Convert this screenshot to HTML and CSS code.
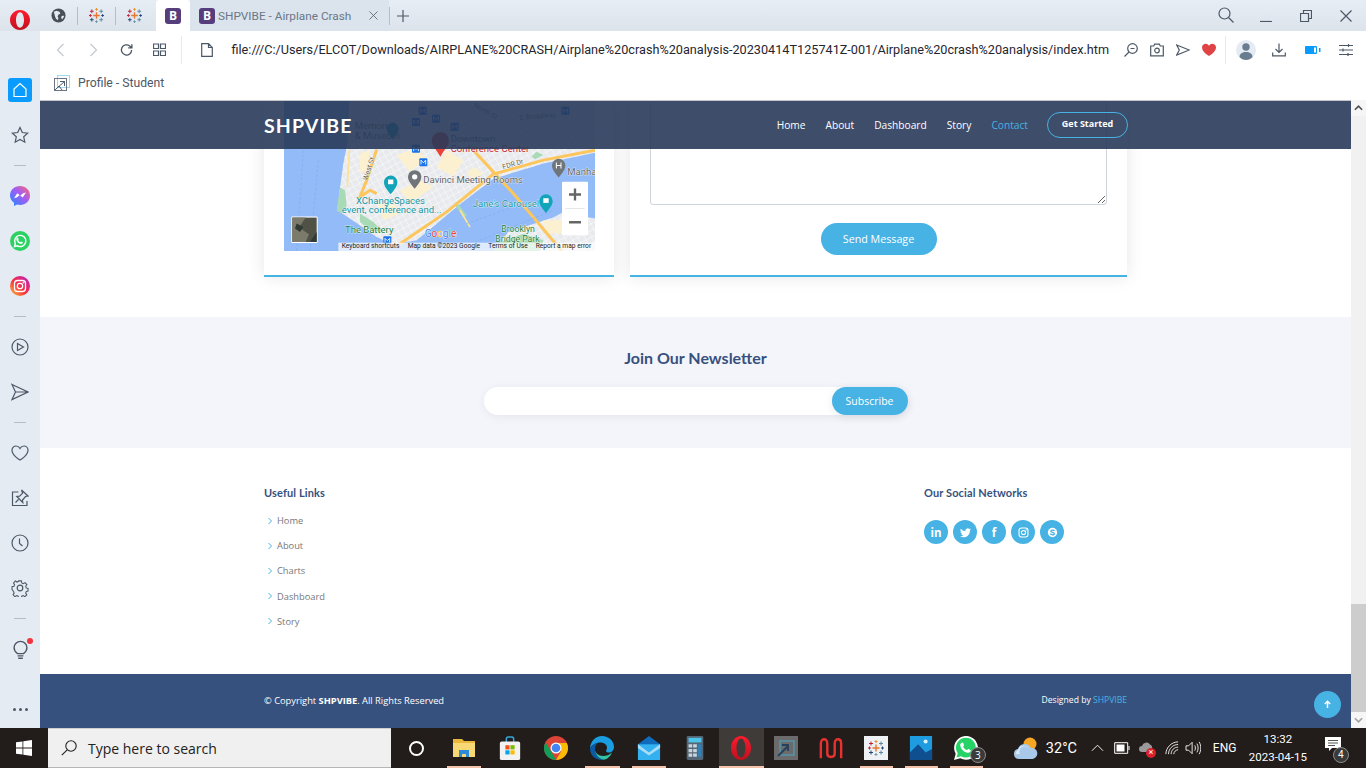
FILE: index.html
```html
<!DOCTYPE html>
<html>
<head>
    <title>SHPVIBE - Airplane Crash</title>
    <link rel="stylesheet" href="styles.css">
</head>
<body>
<svg class="defs" width="0" height="0">
    <defs>
        <g id="tableau">
            <path stroke="#e8762c" stroke-width="1.4" d="M8 4.5v7M4.5 8h7"/>
            <path stroke="#5b879b" stroke-width="1" d="M13 1.5v4M11 3.5h4"/>
            <path stroke="#c72035" stroke-width="1" d="M3 1.5v4M1 3.5h4"/>
            <path stroke="#1f447e" stroke-width="1" d="M3 10.5v4M1 12.5h4"/>
            <path stroke="#59879b" stroke-width="1" d="M13 10.5v4M11 12.5h4"/>
            <path stroke="#eb912b" stroke-width="1" d="M8 0v3M6.5 1.5h3"/>
            <path stroke="#7099a6" stroke-width="1" d="M8 13v3M6.5 14.5h3"/>
            <path stroke="#c72035" stroke-width="1" d="M1.5 6.5v3M0 8h3"/>
            <path stroke="#1f447e" stroke-width="1" d="M14.5 6.5v3M13 8h3"/>
        </g>
        <pattern id="streets" width="18" height="18" patternUnits="userSpaceOnUse" patternTransform="rotate(-28)">
            <path d="M0 0H18M0 0V18" stroke="#fff" stroke-width="2.5" fill="none"/>
        </pattern>
        <linearGradient id="messengerFill" x1="0" y1="1" x2="1" y2="0">
            <stop offset="0" stop-color="#1d8cff"/>
            <stop offset=".55" stop-color="#a35cf5"/>
            <stop offset="1" stop-color="#ff6a6a"/>
        </linearGradient>
        <linearGradient id="instaFill" x1="0" y1="1" x2="1" y2="0">
            <stop offset="0" stop-color="#fdc83a"/>
            <stop offset=".45" stop-color="#f7313c"/>
            <stop offset="1" stop-color="#b81fd0"/>
        </linearGradient>
        <linearGradient id="operaFill" x1="0" y1="0" x2="0" y2="1">
            <stop offset="0" stop-color="#ff1b2d"/>
            <stop offset="1" stop-color="#c0101f"/>
        </linearGradient>
    </defs>
</svg>

<div class="window">
    <div class="tabbar">
        <div class="opera-cell">
            <svg class="opera-logo" viewBox="0 0 20 20"><path fill="url(#operaFill)" fill-rule="evenodd" d="M10 0c5.500 0 10 4.500 10 10s-4.500 10-10 10S0 15.500 0 10 4.500 0 10 0zm0 2.300C7.700 2.300 6 5.700 6 10s1.700 7.700 4 7.700 4-3.400 4-7.700-1.700-7.700-4-7.700z"/></svg>
        </div>
        <div class="pin-tab">
            <svg class="tab-ico" viewBox="0 0 16 16"><circle cx="8" cy="8" r="7.5" fill="#4a4f57"/><path fill="#e4ebf3" d="M3 4l3-1 3 1 1 2-2 1-1 2 1 2-1 2-2-2-1-3zM11 9l2-1 1 1-2 3-1-1z"/></svg>
        </div>
        <span class="tab-sep"></span>
        <div class="pin-tab"><svg class="tab-ico" viewBox="0 0 16 16" fill="none"><use href="#tableau"/></svg></div>
        <span class="tab-sep"></span>
        <div class="pin-tab"><svg class="tab-ico" viewBox="0 0 16 16" fill="none"><use href="#tableau"/></svg></div>
        <div class="tab-active"><span class="boot-ico">B</span></div>
        <div class="tab-open">
            <span class="boot-ico">B</span>
            <span class="tab-title">SHPVIBE - Airplane Crash</span>
            <svg class="tab-close" viewBox="0 0 10 10"><path d="M.5.5l9 9M9.5.5l-9 9"/></svg>
        </div>
        <span class="tab-sep"></span>
        <svg class="tab-plus" viewBox="0 0 12 12"><path d="M6 0v12M0 6h12"/></svg>
        <div class="win-controls">
            <svg class="win-search ico" viewBox="0 0 16 16"><circle cx="6.5" cy="6.5" r="5.5"/><path d="M10.5 10.5L15.5 15.5"/></svg>
            <span class="win-btn"><svg class="ico" viewBox="0 0 12 12"><path d="M0 11.5h12"/></svg></span>
            <span class="win-btn"><svg class="ico" viewBox="0 0 12 12"><path d="M.5 3.5h8v8h-8zM3.500 3.500v-3h8v8h-3"/></svg></span>
            <span class="win-btn"><svg class="ico" viewBox="0 0 12 12"><path d="M.5.5l11 11M11.5.5l-11 11"/></svg></span>
        </div>
    </div>

    <div class="main">
        <aside class="sidebar">
            <div class="side-item"><span class="side-home"><svg viewBox="0 0 16 16"><path d="M2 7l6-5.500L14 7v7.500H2z"/></svg></span></div>
            <div class="side-item"><svg class="side-ico ico" viewBox="0 0 18 18"><path d="M9 1.500l2.300 5 5.400.600-4 3.700 1.100 5.400L9 13.500l-4.800 2.700 1.100-5.400-4-3.700 5.400-.600z"/></svg></div>
            <span class="side-rule"></span>
            <div class="side-item">
                <svg class="side-app" viewBox="0 0 20 20"><path fill="url(#messengerFill)" d="M10 0c5.600 0 10 4.100 10 9.500S15.600 19 10 19c-1 0-2-.1-2.900-.4L4 20v-3.300C1.500 15 0 12.400 0 9.500 0 4.100 4.400 0 10 0z"/><path fill="#fff" d="M4 12.300l3.200-5 3 2.300 3-2.300 2.800-.9-3.300 5-3-2.300-3 2.300z"/></svg>
            </div>
            <div class="side-item">
                <svg class="side-app" viewBox="0 0 20 20"><circle cx="10" cy="10" r="10" fill="#2bd162"/><path fill="none" stroke="#fff" stroke-width="1.4" d="M4.500 15.500l.8-3A5.600 5.600 0 1 1 7.500 14.800z"/><path fill="#fff" d="M7.700 6.400c.5 0 .8 1.300 1 1.700.1.400-.6.800-.5 1.100.4.900 1.200 1.600 2.100 2 .4.100.7-.8 1.100-.6.400.2 1.500.7 1.500 1 0 .9-1 1.500-1.800 1.400-2.500-.4-4.500-2.400-4.900-4.800-.1-.7.500-1.800 1.500-1.800z"/></svg>
            </div>
            <div class="side-item">
                <svg class="side-app" viewBox="0 0 20 20"><circle cx="10" cy="10" r="10" fill="url(#instaFill)"/><rect x="4.5" y="4.5" width="11" height="11" rx="3" fill="none" stroke="#fff" stroke-width="1.3"/><circle cx="10" cy="10" r="2.7" fill="none" stroke="#fff" stroke-width="1.3"/><circle cx="13.3" cy="6.7" r=".8" fill="#fff"/></svg>
            </div>
            <span class="side-rule"></span>
            <div class="side-item"><svg class="side-ico ico" viewBox="0 0 18 18"><circle cx="9" cy="9" r="8"/><path d="M6.500 5.500l6 3.500-6 3.500z"/></svg></div>
            <div class="side-item"><svg class="side-ico ico" viewBox="0 0 18 18"><path d="M1 1.500l16 7.500-16 7.500 3.500-7.500zM4.500 9H17"/></svg></div>
            <span class="side-rule"></span>
            <div class="side-item"><svg class="side-ico ico" viewBox="0 0 18 18"><path d="M9 16S1 11.500 1 6.300C1 3.700 3 2 5 2c1.700 0 3.200 1 4 2.500C9.800 3 11.300 2 13 2c2 0 4 1.700 4 4.300C17 11.500 9 16 9 16z"/></svg></div>
            <div class="side-item"><svg class="side-ico ico" viewBox="0 0 18 18"><path d="M7.500 3H1.500v13.500H16V12M10.500 1L17 7l-2.500.5-3 3.500.3 2.500-6-6 2.800-.3 3-3zM7.500 10.500L4.500 13.500"/></svg></div>
            <div class="side-item"><svg class="side-ico ico" viewBox="0 0 18 18"><circle cx="9" cy="9" r="8"/><path d="M8.500 4.500V9.500l3 2.500"/></svg></div>
            <div class="side-item"><svg class="side-ico ico" viewBox="0 0 18 18"><circle cx="9" cy="9" r="2.800"/><path d="M7.500 1h3l.5 2.300 1.700.8 2-1.200 2 2.300-1.300 1.900.6 1.800 2 .6v2.900l-2 .6-.6 1.700 1.200 2-2.200 2-1.900-1.200-1.600.7-.5 2.200h-3l-.5-2.200-1.700-.7-1.900 1.200-2.100-2.100 1.200-1.900-.7-1.700L0 10.500V7.600l2.200-.6.700-1.800-1.200-1.900 2-2.200 2 1.200 1.700-.8z" transform="translate(1 1) scale(.89)"/></svg></div>
            <span class="side-rule"></span>
            <div class="side-item side-bulb">
                <svg class="side-ico bulb-ico ico" viewBox="0 0 18 18"><path d="M6.500 12.500C5 11.500 3.500 9.800 3.500 7.500a5.500 5.500 0 0 1 11 0c0 2.300-1.500 4-3 5zM6.500 14.500h5M7 16.500h4"/></svg>
                <span class="bulb-dot"></span>
            </div>
            <div class="side-more"><i></i><i></i><i></i></div>
        </aside>

        <div class="browser">
            <div class="addressbar">
                <span class="nav-btn"><svg class="ico ico-off" viewBox="0 0 10 14"><path d="M8 1L2 7l6 6"/></svg></span>
                <span class="nav-btn"><svg class="ico ico-off" viewBox="0 0 10 14"><path d="M2 1l6 6-6 6"/></svg></span>
                <span class="nav-btn"><svg class="ico ico-reload" viewBox="0 0 14 14"><path d="M12.500 7A5.500 5.500 0 1 1 10.500 2.700L12.500 4.500M12.800.8v4h-4"/></svg></span>
                <span class="nav-btn"><svg class="ico ico-grid" viewBox="0 0 13 13"><path d="M.5.5h5V5h-5zM7.500.5h5V5h-5zM.5 7.500h5V12h-5zM7.500 7.500h5V12h-5z"/></svg></span>
                <span class="bar-sep"></span>
                <svg class="ico file-ico" viewBox="0 0 12 14"><path d="M.7.7h6.800l3.800 3.800v8.800H.7zM7.500.7v3.800h3.800"/></svg>
                <span class="url">file:///C:/Users/ELCOT/Downloads/AIRPLANE%20CRASH/Airplane%20crash%20analysis-20230414T125741Z-001/Airplane%20crash%20analysis/index.htm</span>
                <div class="bar-tools">
                    <span class="tool"><svg class="ico" viewBox="0 0 14 14"><circle cx="8.5" cy="5.5" r="4.8"/><path d="M5 9l-4.500 4.500M6.500 5.500h4"/></svg></span>
                    <span class="tool"><svg class="ico" viewBox="0 0 14 14"><path d="M.7 3h3l1-1.800h4.600l1 1.800h3v9.800H.7z"/><circle cx="7" cy="7.5" r="2.3"/></svg></span>
                    <span class="tool"><svg class="ico" viewBox="0 0 14 14"><path d="M.7 2l12.600 5-12.600 5 2.600-5z"/></svg></span>
                    <span class="tool"><svg class="heart-ico" viewBox="0 0 14 14"><path fill="#e04343" d="M7 13S0 9 0 4.500C0 2 2 .8 3.700.8 5.100.8 6.300 1.500 7 2.800 7.700 1.500 8.900.8 10.300.8 12 .8 14 2 14 4.500 14 9 7 13 7 13z"/></svg></span>
                    <span class="bar-sep bar-sep-tools"></span>
                    <span class="avatar"><svg viewBox="0 0 20 20"><circle cx="10" cy="10" r="10" fill="#e4ebf3"/><circle cx="10" cy="7" r="3.7" fill="#6a7c90"/><path fill="#6a7c90" d="M3.500 17c0-3.500 3-5 6.500-5s6.500 1.500 6.500 5c-1.500 1.800-4 3-6.500 3s-5-1.200-6.500-3z"/></svg></span>
                    <span class="tool tool-wide tool-dl"><svg class="ico" viewBox="0 0 14 14"><path d="M7 .5v9M3.500 6L7 9.500 10.500 6M.7 9.500v3.300h12.600V9.500"/></svg></span>
                    <span class="tool tool-batt"><svg class="batt-ico" viewBox="0 0 16 8"><rect width="12" height="8" rx="1" fill="#0a9bff"/><rect x="9" y="1.5" width="2" height="5" fill="#fff"/><rect x="14" y="2" width="1.5" height="4" fill="#0a9bff"/></svg></span>
                    <span class="tool tool-wide"><svg class="ico" viewBox="0 0 14 14"><path d="M0 2.500h14M0 7h14M0 11.500h14M9.500 1v3M4 5.500v3M9 10v3"/></svg></span>
                </div>
            </div>
            <div class="bookmarks">
                <svg class="bm-ico" viewBox="0 0 16 16"><rect x="3.5" y=".5" width="12" height="12" fill="none" stroke="#9fd8f2"/><rect x=".5" y="3.5" width="12" height="12" fill="none" stroke="#6a7482"/><path d="M2.500 13.500l8-7M6 6.500h4.500V11M1 15l4-4 3 4" fill="none" stroke="#4f5b6b"/></svg>
                <span class="bm-label">Profile - Student</span>
            </div>

            <div class="viewport">
                <div class="page">
                    <header class="site-header">
                        <div class="container header-row">
                            <a class="logo">SHPVIBE</a>
                            <nav class="menu">
                                <a>Home</a>
                                <a>About</a>
                                <a>Dashboard</a>
                                <a>Story</a>
                                <a class="active">Contact</a>
                                <a class="get-started">Get Started</a>
                            </nav>
                        </div>
                    </header>

                    <section class="contact">
                        <div class="container contact-grid">
                            <div class="card card-map">
                                <svg class="map" viewBox="72 0 933 452" preserveAspectRatio="none">
                                    <rect class="m-water" x="72" y="0" width="933" height="452"/>
                                    <path class="m-land" d="M268 0L262 130 250 190 240 265 232 330 290 368 350 410 400 432 470 420 600 312 700 236 850 190 1005 158V0z"/>
                                    <path class="m-street" d="M268 0L262 130 250 190 240 265 232 330 290 368 350 410 400 432 470 420 600 312 700 236 850 190 1005 158V0z"/>
                                    <path class="m-land" d="M700 452L745 395 880 352 905 338 1005 355V452z"/>
                                    <path class="m-street" d="M700 452L745 395 880 352 905 338 1005 355V452z"/>
                                    <path class="m-cream" d="M410 165l60-20 30 30-50 40zM420 270l60-30 40 20-70 50zM560 150l50 30-30 50-50-30zM350 310l50-10 20 40-50 20zM850 360h60v40h-50zM300 160l30-10-10 60-20 10zM640 200l30 20-30 20-20-20z"/>
                                    <path class="m-park" d="M240 262l15 8 5 45-10 25-20-8zM300 340l40 25 30 30-40-5-30-25zM720 425l70-25 60 20-10 32H700zM830 155l20 10-25 12-10-8zM590 305l30 40-8 5-30-38z"/>
                                    <path class="m-road" d="M640 150L760 280 905 452M418 432L560 335 700 222 850 180 1005 150M350 148L320 240 300 290 330 270 350 280"/>
                                    <path class="m-road-thin" d="M268 150L262 260M600 330l30 50"/>
                                    <path class="m-ferry" d="M130 150L110 452M175 180L150 452M620 370l170-60M660 420l220-90"/>

                                    <text class="m-t m-grey" x="284" y="88">Memorial</text>
                                    <text class="m-t m-grey" x="284" y="116">&amp; Museum</text>
                                    <text class="m-t m-grey" x="572" y="126">Downtown</text>
                                    <text class="m-t m-red" x="572" y="156">Conference Center</text>
                                    <text class="m-t m-grey" x="490" y="248">Davinci Meeting Rooms</text>
                                    <text class="m-t m-grey" x="922" y="226">Manha</text>
                                    <text class="m-t m-teal" x="288" y="312">XChangeSpaces</text>
                                    <text class="m-t m-teal" x="245" y="339">event, conference and...</text>
                                    <text class="m-t m-teal" x="638" y="320">Jane's Carousel</text>
                                    <text class="m-t m-green" x="255" y="398">The Battery</text>
                                    <text class="m-t m-park-label m-green" x="724" y="395">Brooklyn</text>
                                    <text class="m-t m-park-label m-green" x="706" y="425">Bridge Park</text>
                                    <text class="m-road-label" x="730" y="208" transform="rotate(-17 730 208)">FDR Dr</text>
                                    <text class="m-road-label" x="322" y="242" transform="rotate(-72 322 242)">West St</text>
                                    <text class="m-road-label m-dim" x="640" y="20" transform="rotate(30 640 20)">North St</text>
                                    <text class="m-road-label m-dim" x="780" y="60" transform="rotate(-5 780 60)">E Broadway</text>

                                    <rect class="m-metro" x="456" y="54" width="24" height="24"/>
                                    <rect class="m-metro" x="476" y="20" width="24" height="24"/>
                                    <rect class="m-metro" x="516" y="44" width="24" height="24"/>
                                    <rect class="m-metro" x="572" y="68" width="24" height="24"/>
                                    <rect class="m-metro" x="456" y="134" width="24" height="24"/>
                                    <rect class="m-metro" x="478" y="174" width="24" height="24"/>
                                    <rect class="m-metro" x="904" y="20" width="24" height="24"/>
                                    <rect class="m-metro" x="370" y="408" width="24" height="22"/>
                                    <path class="m-metro-m" d="M461 73V60l7 8 7-8v13M481 39V26l7 8 7-8v13M521 63V50l7 8 7-8v13M577 87V74l7 8 7-8v13M461 153v-13l7 8 7-8v13M483 193v-13l7 8 7-8v13M909 39V26l7 8 7-8v13M375 426v-12l7 7 7-7v12"/>

                                    <path class="m-pin-teal" d="M392 282c-12-16-20-24-20-36a20 20 0 0 1 40 0c0 12-8 20-20 36z"/>
                                    <rect class="m-pin-mark" x="384" y="238" width="16" height="14"/>
                                    <path class="m-pin-teal" d="M858 338c-12-16-20-24-20-36a20 20 0 0 1 40 0c0 12-8 20-20 36z"/>
                                    <rect class="m-pin-mark" x="850" y="294" width="16" height="14"/>
                                    <path class="m-pin-teal" d="M398 118c-10-14-18-20-18-32a18 18 0 0 1 36 0c0 12-8 18-18 32z"/>
                                    <path class="m-pin-grey" d="M464 266c-12-16-20-24-20-36a20 20 0 0 1 40 0c0 12-8 20-20 36z"/>
                                    <circle class="m-pin-hole" cx="464" cy="230" r="8"/>
                                    <path class="m-pin-grey" d="M896 232c-12-16-20-24-20-36a20 20 0 0 1 40 0c0 12-8 20-20 36z"/>
                                    <path class="m-pin-h" d="M889 187v18M903 187v18M889 196h14"/>
                                    <path class="m-pin-red" d="M541 170c-12-22-26-34-26-48a26 26 0 0 1 52 0c0 14-14 26-26 48z"/>

                                    <text class="m-google" x="494" y="410"><tspan fill="#4285f4">G</tspan><tspan fill="#ea4335">o</tspan><tspan fill="#fbbc04">o</tspan><tspan fill="#4285f4">g</tspan><tspan fill="#34a853">l</tspan><tspan fill="#ea4335">e</tspan></text>

                                    <rect class="m-thumb-frame" x="94" y="349" width="79" height="79" rx="3"/>
                                    <rect class="m-thumb" x="97" y="352" width="73" height="73"/>
                                    <path class="m-thumb-a" d="M97 352h40l-20 30 30 20-10 23H97z"/>
                                    <path class="m-thumb-b" d="M150 425l20-30v30zM110 370l20 10-10 15-15-10z"/>

                                    <rect class="m-ctrl" x="906" y="245" width="78" height="160" rx="3"/>
                                    <path class="m-ctrl-rule" d="M916 325h58"/>
                                    <path class="m-ctrl-sign" d="M945 265v36M927 283h36M927 366h36"/>

                                    <rect class="m-attr" x="235" y="427" width="770" height="25"/>
                                    <text class="m-attr-t" x="245" y="444">Keyboard shortcuts</text>
                                    <text class="m-attr-t" x="443" y="444">Map data ©2023 Google</text>
                                    <text class="m-attr-t" x="685" y="444">Terms of Use</text>
                                    <text class="m-attr-t" x="827" y="444">Report a map error</text>
                                </svg>
                            </div>
                            <div class="card card-form">
                                <textarea class="message"></textarea>
                                <button class="send-btn" type="button">Send Message</button>
                            </div>
                        </div>
                    </section>

                    <section class="newsletter">
                        <h4>Join Our Newsletter</h4>
                        <form class="sub-form">
                            <input type="email">
                            <button type="button">Subscribe</button>
                        </form>
                    </section>

                    <section class="footer-top">
                        <div class="container footer-grid">
                            <div>
                                <h4>Useful Links</h4>
                                <ul class="link-list">
                                    <li><svg viewBox="0 0 6 8"><path d="M1.500 1l3 3-3 3"/></svg><a>Home</a></li>
                                    <li><svg viewBox="0 0 6 8"><path d="M1.500 1l3 3-3 3"/></svg><a>About</a></li>
                                    <li><svg viewBox="0 0 6 8"><path d="M1.500 1l3 3-3 3"/></svg><a>Charts</a></li>
                                    <li><svg viewBox="0 0 6 8"><path d="M1.500 1l3 3-3 3"/></svg><a>Dashboard</a></li>
                                    <li><svg viewBox="0 0 6 8"><path d="M1.500 1l3 3-3 3"/></svg><a>Story</a></li>
                                </ul>
                            </div>
                            <div>
                                <h4>Our Social Networks</h4>
                                <div class="social">
                                    <a class="soc-text">in</a>
                                    <a><svg viewBox="0 0 16 16"><path fill="#fff" d="M5.026 15c6.038 0 9.341-5.003 9.341-9.334 0-.14 0-.282-.006-.422A6.685 6.685 0 0 0 16 3.542a6.658 6.658 0 0 1-1.889.518 3.301 3.301 0 0 0 1.447-1.817 6.533 6.533 0 0 1-2.087.793A3.286 3.286 0 0 0 7.875 6.03a9.325 9.325 0 0 1-6.767-3.429 3.289 3.289 0 0 0 1.018 4.382A3.323 3.323 0 0 1 .64 6.575v.045a3.288 3.288 0 0 0 2.632 3.218 3.203 3.203 0 0 1-.865.115 3.23 3.23 0 0 1-.614-.057 3.283 3.283 0 0 0 3.067 2.277A6.588 6.588 0 0 1 .78 13.58a6.32 6.32 0 0 1-.78-.045A9.344 9.344 0 0 0 5.026 15z"/></svg></a>
                                    <a class="soc-text">f</a>
                                    <a><svg viewBox="0 0 16 16"><rect x="1.5" y="1.5" width="13" height="13" rx="3.5" fill="none" stroke="#fff" stroke-width="1.6"/><circle cx="8" cy="8" r="3" fill="none" stroke="#fff" stroke-width="1.6"/><circle cx="11.8" cy="4.2" r="1" fill="#fff"/></svg></a>
                                    <a><svg viewBox="0 0 16 16"><circle cx="8" cy="8" r="6.8" fill="#fff"/><path fill="none" stroke="#47b2e4" stroke-width="1.7" d="M11 5.500C10 4.300 5.500 4 5.500 6c0 2.200 5.300 1.500 5.300 4 0 2-4.800 1.700-6-.3"/></svg></a>
                                </div>
                            </div>
                        </div>
                    </section>

                    <section class="footer-bottom">
                        <div class="container footer-row">
                            <span>© Copyright <b>SHPVIBE</b>. All Rights Reserved</span>
                            <span class="credits">Designed by <a>SHPVIBE</a></span>
                        </div>
                    </section>

                    <a class="back-top"><svg viewBox="0 0 10 10"><path d="M5 9V1.500M2 4.500l3-3 3 3"/></svg></a>
                </div>
                <div class="scrollbar">
                    <span class="sb-btn"><svg viewBox="0 0 10 6"><path class="sb-up" d="M1 5l4-4 4 4"/></svg></span>
                    <span class="sb-track"><span class="sb-thumb"></span></span>
                    <span class="sb-btn"><svg viewBox="0 0 10 6"><path class="sb-down" d="M1 1l4 4 4-4"/></svg></span>
                </div>
            </div>
        </div>
    </div>

    <footer class="taskbar">
        <span class="start"><svg viewBox="0 0 16 16"><path fill="#fff" d="M0 2.300l6.500-.9v6.200H0zM7.300 1.300L16 0v7.600H7.300zM0 8.400h6.500v6.200L0 13.700zM7.300 8.400H16V16l-8.700-1.300z"/></svg></span>
        <div class="search-box">
            <svg viewBox="0 0 16 16"><circle cx="10" cy="6" r="5.200"/><path d="M6.200 9.800L.8 15.200"/></svg>
            <span>Type here to search</span>
        </div>
        <span class="cortana"><i></i></span>
        <span class="task-app wide on"><svg viewBox="0 0 24 20"><path fill="#e9b83c" d="M1 1h9l2 2h11v16H1z"/><path fill="#f8d775" d="M1 5h22v14H1z"/><path fill="#2c8ad6" d="M7 19v-7h10v7h-3v-3h-4v3z"/></svg></span>
        <span class="task-app wide"><svg viewBox="0 0 22 26"><path fill="none" stroke="#2fa9e0" stroke-width="1.6" d="M7 7V3.500C7 2 8 1 9 1h4c1 0 2 1 2 2.500V7"/><rect y="6" width="22" height="20" rx="2" fill="#f2f2f2"/><rect x="6" y="10" width="4.5" height="4.5" fill="#f25022"/><rect x="11.5" y="10" width="4.5" height="4.5" fill="#7fba00"/><rect x="6" y="15.5" width="4.5" height="4.5" fill="#00a4ef"/><rect x="11.5" y="15.5" width="4.5" height="4.5" fill="#ffb900"/></svg></span>
        <span class="task-app wide"><svg viewBox="0 0 24 24"><circle cx="12" cy="12" r="12" fill="#db4437"/><path fill="#0f9d58" d="M1.600 6.500L7 15.500l5 8.500C5.400 24 0 18.600 0 12c0-2 .6-3.900 1.600-5.500z"/><path fill="#fbbc05" d="M12 7h10.800c.8 1.500 1.200 3.200 1.200 5 0 6.600-5.400 12-12 12l5-8.500z"/><circle cx="12" cy="12" r="5.5" fill="#fff"/><circle cx="12" cy="12" r="4.3" fill="#4285f4"/></svg></span>
        <span class="task-app wide on"><svg viewBox="0 0 24 24"><path fill="#1b9de2" d="M12 0c7 0 12 5 12 11 0 3.500-2.500 5.500-5 5.500-2 0-3-.8-3-1.800 0-.8 1-1.200 1-3 0-3-3-5.200-6.500-5.200C6 6.500 2 9 0 12.500 .5 5 5.500 0 12 0z"/><path fill="#0c59a4" d="M0 12.500C2 9 6 6.500 10.500 6.500c-4 0-5.500 3.500-5.500 6.500 0 5 3.500 9 9 10.800-1 .2-1.500.2-2 .2C5 24 0 19 0 12.500z"/><path fill="#35c1a3" d="M14 23.800C9 23 5 18.500 5 13c0 4 3.500 7 8 7 3.500 0 6.500-1 9-3.500-1.500 4-4.500 6.500-8 7.300z"/></svg></span>
        <span class="task-app wide on"><svg viewBox="0 0 24 26"><path fill="#0f6cbd" d="M12 0l12 9v3L12 18 0 12V9z"/><rect y="9" width="24" height="17" fill="#32b0f0"/><path fill="#a8dcf7" d="M0 9l12 9 12-9v4l-12 8L0 13z"/></svg></span>
        <span class="task-app wide"><svg viewBox="0 0 18 26"><rect width="18" height="26" rx="1.5" fill="#546675"/><rect x="2" y="2" width="14" height="5" fill="#4dc3e8"/><path fill="#c9d4dc" d="M2 9h4v3.500H2zM7 9h4v3.500H7zM2 14h4v3.500H2zM7 14h4v3.500H7zM2 19h4v3.500H2zM7 19h4v3.500H7z"/><path fill="#2f81b7" d="M12 9h4v13.500h-4z"/></svg></span>
        <span class="task-app task-opera on"><svg viewBox="0 0 20 24"><path fill="url(#operaFill)" fill-rule="evenodd" d="M10 0c5.500 0 10 5.400 10 12s-4.500 12-10 12S0 18.600 0 12 4.500 0 10 0zm0 2.500C7.500 2.500 5.500 6.800 5.500 12s2 9.500 4.500 9.500 4.500-4.300 4.500-9.500-2-9.500-4.500-9.500z"/></svg></span>
        <span class="task-app"><svg viewBox="0 0 24 24"><rect width="24" height="24" fill="#6b6b6b"/><rect x="6" y="5" width="14" height="14" fill="none" stroke="#4aa8c4"/><path fill="none" stroke="#23405e" stroke-width="1.8" d="M4 20L14 10M8 9h6v6"/></svg></span>
        <span class="task-app"><svg viewBox="0 0 26 22"><path fill="none" stroke="#e8322f" stroke-width="2.6" d="M2 22V6c0-6 7-6 7 0v11c0 5 8 5 8 0V6c0-6 7-6 7 0v16"/></svg></span>
        <span class="task-app on"><svg viewBox="0 0 24 24"><rect width="24" height="24" fill="#eef2f4"/><g transform="translate(4 4)" fill="none"><use href="#tableau"/></g></svg></span>
        <span class="task-app on"><svg viewBox="0 0 24 26"><rect width="24" height="26" fill="#1f9be0"/><path fill="#0f4f8f" d="M0 26V18l9-9 8 9 7-4v12z"/><circle cx="17" cy="6" r="2.2" fill="#d9f1fc"/></svg></span>
        <span class="task-app on task-wa"><svg viewBox="0 0 24 24"><path fill="#fff" d="M0 24l1.700-6.200A11.900 11.900 0 1 1 6.300 22.300z"/><path fill="#25d366" d="M2.500 21.500l1.200-4.200A9.900 9.900 0 1 1 7 20.300z"/><path fill="#fff" d="M8.600 6.500c.6 0 1.200 2 1.400 2.500.2.600-1 1.200-.8 1.700.7 1.500 1.900 2.700 3.500 3.400.6.200 1.100-1.200 1.700-1 .6.300 2.400 1 2.400 1.500 0 1.400-1.600 2.400-2.900 2.200-4-.6-7.100-3.700-7.700-7.600-.2-1.100.9-2.700 2.400-2.700z"/></svg><em class="count">3</em></span>

        <div class="tray">
            <span class="weather"><svg viewBox="0 0 26 24"><circle cx="17" cy="8" r="6.5" fill="#f6a623"/><path fill="#a8c9ea" d="M6 23a5 5 0 0 1-1-9.900A7 7 0 0 1 18 12a5.500 5.500 0 0 1 1.500 11z"/><path fill="#dbe9f6" d="M7 18a5 5 0 0 1 9-5 6 6 0 0 0-11 1 4 4 0 0 0-2 4z"/></svg></span>
            <span class="temp">32°C</span>
            <svg class="tray-ico chev" viewBox="0 0 14 8"><path d="M1 7l6-6 6 6"/></svg>
            <svg class="tray-ico batt" viewBox="0 0 16 12"><path d="M.7.7h13v10.600H.7zM15 4v4"/><rect x="2.5" y="2.5" width="8" height="7" fill="#fff" stroke="none"/></svg>
            <span class="net-x"><svg viewBox="0 0 14 12"><path fill="#9a9a9a" d="M3 11a3 3 0 0 1 0-6 4.500 4.500 0 0 1 8-1.500A4 4 0 0 1 13 8v3z"/></svg><i>×</i></span>
            <svg class="tray-ico wifi" viewBox="0 0 16 16"><path d="M1 15C1 7.500 7.500 1 15 1M4 15C4 9 9 4 15 4M7 15c0-4.500 3.500-8 8-8M10 15c0-2.500 2.500-5 5-5"/></svg>
            <svg class="tray-ico vol" viewBox="0 0 18 16"><path d="M1 5.500h3L8 1.500v13L4 10.500H1zM11 5c1 2 1 4 0 6M13.500 3c1.800 3 1.800 7 0 10M16 1c2.500 4 2.500 10 0 14"/></svg>
            <span class="lang">ENG</span>
            <span class="clock"><span>13:32</span><span>2023-04-15</span></span>
            <span class="notif"><svg viewBox="0 0 16 15"><path fill="#fff" d="M0 0h16v11H7l-3 3v-3H0z"/><path stroke="#555" d="M3 3.500h10M3 6h10M3 8.500h7"/></svg><em class="count">4</em></span>
        </div>
    </footer>
</div>
</body>
</html>
```

FILE: styles.css
```css
* {
    box-sizing: border-box;
}
html, body {
    margin: 0;
    padding: 0;
    height: 100%;
    overflow: hidden;
}
body {
    font-family: "Open Sans", sans-serif;
    background-color: #fff;
}
h4, ul {
    margin: 0;
    padding: 0;
}
.defs {
    display: block;
    height: 0;
}
.window {
    display: flex;
    flex-direction: column;
    width: 1366px;
    height: 768px;
}
.ico {
    fill: none;
    stroke: #4d5866;
    stroke-width: 1.2;
}

/* tab strip */
.tabbar {
    display: flex;
    align-items: center;
    height: 31px;
    flex: none;
    background: linear-gradient(#e6edf4, #dce3eb);
}
.opera-cell {
    width: 40px;
    height: 31px;
    flex: none;
    display: flex;
    justify-content: center;
    padding-top: 10px;
}
.opera-logo {
    width: 20px;
    height: 20px;
}
.pin-tab {
    width: 37px;
    display: flex;
    justify-content: center;
}
.tab-ico {
    width: 15px;
    height: 15px;
}
.tab-sep {
    width: 1px;
    height: 18px;
    background-color: #b4bdc8;
    flex: none;
}
.tab-active {
    width: 34px;
    height: 31px;
    margin-left: 3px;
    background-color: #fff;
    border-radius: 3px 3px 0 0;
    display: flex;
    align-items: center;
    justify-content: center;
}
.boot-ico {
    width: 16px;
    height: 16px;
    flex: none;
    border-radius: 3px;
    background-color: #563d7c;
    color: #fff;
    font-size: 12px;
    line-height: 16px;
    font-weight: 700;
    text-align: center;
}
.tab-open {
    display: flex;
    align-items: center;
    width: 199px;
    height: 31px;
    padding-left: 9px;
    background-color: #dbe3ec;
}
.tab-title {
    margin-left: 3px;
    font-family: "Roboto", sans-serif;
    font-size: 11.8px;
    color: #6b7888;
    white-space: nowrap;
    width: 150px;
}
.tab-close {
    width: 9px;
    height: 9px;
    margin-left: 1px;
    fill: none;
    stroke: #5f6b7a;
}
.tab-plus {
    width: 12px;
    height: 12px;
    margin-left: 7px;
    fill: none;
    stroke: #4d5866;
    stroke-width: 1.2;
}
.win-controls {
    margin-left: auto;
    display: flex;
    align-items: center;
}
.win-search {
    width: 16px;
    height: 16px;
    margin: -2px 12px 0 0;
}
.win-btn {
    width: 40px;
    display: flex;
    justify-content: center;
}
.win-btn svg {
    width: 12px;
    height: 12px;
}

.main {
    display: flex;
    flex: 1;
    min-height: 0;
}

/* opera sidebar */
.sidebar {
    width: 40px;
    flex: none;
    display: flex;
    flex-direction: column;
    align-items: center;
    padding-top: 36.5px;
    background-color: #e4ebf3;
}
.side-item {
    height: 45px;
    flex: none;
    display: flex;
    align-items: center;
    justify-content: center;
    position: relative;
}
.side-rule {
    width: 12px;
    height: 1px;
    margin: 7.5px 0;
    flex: none;
    background-color: #b4bdc8;
}
.side-home {
    width: 24px;
    height: 24px;
    border-radius: 3px;
    background-color: #0a9bff;
    display: flex;
    align-items: center;
    justify-content: center;
}
.side-home svg {
    width: 16px;
    height: 16px;
    fill: none;
    stroke: #fff;
    stroke-width: 1.2;
}
.side-ico {
    width: 18px;
    height: 18px;
}
.bulb-ico {
    width: 21px;
    height: 21px;
}
.side-app {
    width: 20px;
    height: 20px;
}
.bulb-dot {
    position: absolute;
    top: 11.5px;
    right: -2px;
    width: 6px;
    height: 6px;
    border-radius: 50%;
    background-color: #f5333f;
}
.side-more {
    display: flex;
    gap: 3px;
    margin-top: 36px;
}
.side-more i {
    width: 3px;
    height: 3px;
    border-radius: 50%;
    background-color: #4d5866;
}

/* address bar */
.browser {
    flex: 1;
    min-width: 0;
    display: flex;
    flex-direction: column;
    background-color: #fff;
    border-top-left-radius: 4px;
}
.addressbar {
    height: 37px;
    flex: none;
    display: flex;
    align-items: center;
    padding-left: 3.5px;
}
.nav-btn {
    width: 33px;
    display: flex;
    justify-content: center;
}
.nav-btn svg {
    width: 13px;
    height: 14px;
}
.ico-off {
    stroke: #c3c9d0;
}
.ico-reload {
    stroke-width: 1.4;
}
.bar-sep {
    width: 1px;
    height: 28px;
    margin-left: 5px;
    background-color: #e6e9ed;
    flex: none;
}
.file-ico {
    width: 12px;
    height: 14px;
    margin-left: 19px;
    flex: none;
}
.url {
    margin-left: 19px;
    font-family: "Roboto", sans-serif;
    font-size: 12.68px;
    color: #1f2630;
    white-space: nowrap;
    width: 878px;
    flex: none;
}
.bar-tools {
    display: flex;
    align-items: center;
    margin-left: 8px;
}
.tool {
    width: 26px;
    display: flex;
    justify-content: center;
}
.tool svg {
    width: 14px;
    height: 14px;
}
.heart-ico {
    width: 14px;
    height: 14px;
}
.bar-sep-tools {
    margin-left: 3px;
}
.avatar {
    width: 20px;
    height: 20px;
    margin-left: 10px;
}
.avatar svg {
    display: block;
}
.tool-wide {
    width: 33px;
}
.tool-dl {
    margin-left: 7px;
}
.tool-batt {
    width: 34px;
}
.tool .batt-ico {
    width: 16px;
    height: 8px;
}
.bookmarks {
    height: 32px;
    flex: none;
    display: flex;
    align-items: center;
    padding: 0 0 3px 14px;
}
.bm-ico {
    width: 16px;
    height: 16px;
}
.bm-label {
    margin-left: 8px;
    font-family: "Roboto", sans-serif;
    font-size: 12.2px;
    color: #4d5866;
}

/* scrolled page */
.viewport {
    flex: 1;
    min-height: 0;
    display: flex;
}
.page {
    flex: 1;
    position: relative;
    overflow: hidden;
}
.container {
    width: 863px;
    margin: 0 auto;
}
.site-header {
    position: absolute;
    top: 0;
    left: 0;
    right: 0;
    height: 49px;
    z-index: 5;
    background-color: rgba(40, 58, 90, 0.9);
    border-top: 1px solid #c3c7cc;
}
.header-row {
    display: flex;
    align-items: center;
    justify-content: space-between;
    height: 48px;
}
.logo {
    font-family: "Lato", sans-serif;
    font-size: 19.5px;
    font-weight: 700;
    letter-spacing: 1.08px;
    color: #fff;
}
.menu {
    display: flex;
    align-items: center;
    gap: 20px;
    font-size: 10.2px;
    font-weight: 500;
    color: #fff;
}
.menu .active {
    color: #47b2e4;
    font-weight: 400;
}
.menu .get-started {
    width: 81px;
    height: 26px;
    margin: 0 -1px;
    border: 1.3px solid #47b2e4;
    border-radius: 50px;
    text-align: center;
    line-height: 22px;
    font-size: 9px;
    font-weight: 700;
}

.contact {
    height: 217px;
    flex: none;
    padding-bottom: 40px;
    overflow: hidden;
}
.contact-grid {
    display: grid;
    grid-template-columns: 350px 497px;
    gap: 16px;
    height: 177px;
}
.card {
    background-color: #fff;
    border-bottom: 2px solid #47b2e4;
    box-shadow: 0 0 16px rgba(0, 0, 0, 0.1);
}
.card-map {
    padding: 0 19px 24px 20px;
}
.map {
    display: block;
    width: 311px;
    height: 151px;
}
.card-form {
    display: flex;
    flex-direction: column;
    align-items: center;
    padding: 0 20px 20px;
}
.message {
    display: block;
    width: 457px;
    height: 105px;
    flex: none;
    margin: 0 0 18px;
    border: 1px solid #ced4da;
    border-radius: 3px;
}
.send-btn {
    width: 116px;
    height: 32px;
    padding: 0 0 1px;
    border: none;
    border-radius: 50px;
    background-color: #47b2e4;
    color: #fff;
    font-family: "Open Sans", sans-serif;
    font-size: 10.7px;
}

/* map layers */
.m-water { fill: #93bbf8; }
.m-land { fill: #e8eaed; }
.m-street { fill: url(#streets); }
.m-cream { fill: #fbf0cf; }
.m-park { fill: #a8dab5; }
.m-road { fill: none; stroke: #fcc65c; stroke-width: 9; }
.m-road-thin { fill: none; stroke: #fde293; stroke-width: 5; }
.m-ferry { fill: none; stroke: #7aa5ec; stroke-width: 1.5; stroke-dasharray: 8 6; }
.m-t {
    font-family: "Roboto", sans-serif;
    font-size: 28.5px;
    stroke: #fff;
    stroke-width: 2px;
    paint-order: stroke;
}
.m-park-label {
    font-size: 26px;
}
.m-grey { fill: #5f6368; }
.m-red { fill: #c5221f; }
.m-teal { fill: #0f929e; }
.m-green { fill: #188038; }
.m-road-label {
    font-family: "Roboto", sans-serif;
    font-size: 21px;
    fill: #6b5b3e;
    stroke: #fff;
    stroke-width: 2px;
    paint-order: stroke;
}
.m-dim { fill: #70757a; }
.m-metro { fill: #1a73e8; rx: 3px; }
.m-metro-m { fill: none; stroke: #fff; stroke-width: 2.5; }
.m-pin-teal { fill: #12a4b8; }
.m-pin-mark { fill: #fff; }
.m-pin-grey { fill: #70757a; }
.m-pin-hole { fill: #fff; }
.m-pin-h { fill: none; stroke: #fff; stroke-width: 3; }
.m-pin-red { fill: #ea4335; }
.m-google {
    font-family: "Roboto", sans-serif;
    font-size: 30px;
    stroke: #fff;
    stroke-width: 2px;
    paint-order: stroke;
}
.m-thumb-frame { fill: #fff; }
.m-thumb { fill: #4f5245; }
.m-thumb-a { fill: #7b7a6b; }
.m-thumb-b { fill: #2e3a33; }
.m-ctrl { fill: #fff; }
.m-ctrl-rule { stroke: #e6e6e6; stroke-width: 3; }
.m-ctrl-sign { stroke: #666; stroke-width: 7; fill: none; }
.m-attr { fill: #fff; fill-opacity: 0.7; }
.m-attr-t {
    font-family: "Roboto", sans-serif;
    font-size: 20px;
    fill: #222;
}

/* newsletter */
.newsletter {
    height: 131px;
    flex: none;
    display: flex;
    flex-direction: column;
    align-items: center;
    padding-top: 30px;
    background-color: #f3f5fa;
}
.newsletter h4 {
    font-family: "Lato", sans-serif;
    font-size: 16px;
    line-height: 22px;
    font-weight: 700;
    color: #37517e;
}
.sub-form {
    display: flex;
    width: 424px;
    height: 28px;
    margin-top: 18px;
    border-radius: 50px;
    background-color: #fff;
    box-shadow: 0 2px 10px rgba(0, 0, 0, 0.06);
}
.sub-form input {
    flex: 1;
    min-width: 0;
    border: none;
    background: none;
    outline: none;
}
.sub-form button {
    width: 76px;
    padding: 0;
    border: none;
    border-radius: 50px;
    background-color: #47b2e4;
    color: #fff;
    font-family: "Open Sans", sans-serif;
    font-size: 10.5px;
    box-shadow: 0 2px 10px rgba(0, 0, 0, 0.08);
}

/* footer */
.footer-top {
    height: 226px;
    flex: none;
    padding-top: 38px;
}
.footer-grid {
    display: grid;
    grid-template-columns: 660px 1fr;
}
.footer-top h4 {
    font-family: "Lato", sans-serif;
    font-size: 11px;
    line-height: 14px;
    font-weight: 700;
    letter-spacing: 0.12px;
    color: #37517e;
}
.link-list {
    list-style: none;
    margin-top: 8px;
}
.link-list li {
    display: flex;
    align-items: center;
    height: 25.2px;
    padding-left: 3px;
    font-size: 9.3px;
    color: #777;
}
.link-list svg {
    width: 6px;
    height: 8px;
    margin-right: 4px;
    fill: none;
    stroke: #47b2e4;
}
.social {
    display: flex;
    gap: 5px;
    margin-top: 20px;
}
.social a {
    width: 24px;
    height: 24px;
    border-radius: 50%;
    background-color: #47b2e4;
    display: flex;
    align-items: center;
    justify-content: center;
}
.social svg {
    width: 11px;
    height: 11px;
}
.social .soc-text {
    color: #fff;
    font-size: 11.5px;
    font-weight: 700;
}
.footer-bottom {
    height: 54px;
    flex: none;
    background-color: #37517e;
    color: #fff;
    font-size: 9.3px;
}
.footer-row {
    display: flex;
    align-items: center;
    justify-content: space-between;
    height: 52px;
}
.footer-row a {
    color: #47b2e4;
}
.credits {
    font-size: 8.6px;
    margin-top: -1px;
}
.back-top {
    position: absolute;
    right: 10px;
    bottom: 10px;
    width: 27px;
    height: 27px;
    border-radius: 50%;
    background-color: #47b2e4;
    display: flex;
    align-items: center;
    justify-content: center;
}
.back-top svg {
    width: 9px;
    height: 9px;
    fill: none;
    stroke: #fff;
    stroke-width: 1.6;
}

.scrollbar {
    width: 15px;
    flex: none;
    display: flex;
    flex-direction: column;
    background-color: #f1f1f1;
}
.sb-btn {
    height: 16px;
    flex: none;
    display: flex;
    align-items: center;
    justify-content: center;
    background-color: #f6f6f6;
}
.sb-btn svg {
    width: 9px;
    height: 6px;
    fill: none;
    stroke-width: 1.8;
}
.sb-up { stroke: #505050; }
.sb-down { stroke: #a3a3a3; }
.sb-track {
    flex: 1;
    display: flex;
    align-items: flex-end;
}
.sb-thumb {
    width: 15px;
    height: 108px;
    background-color: #cdcdcd;
}

/* windows taskbar */
.taskbar {
    height: 40px;
    flex: none;
    display: flex;
    align-items: center;
    background-color: #221d1a;
    color: #fff;
}
.start {
    width: 48px;
    flex: none;
    display: flex;
    justify-content: center;
}
.start svg {
    width: 16px;
    height: 16px;
}
.search-box {
    display: flex;
    align-items: center;
    width: 343px;
    height: 40px;
    flex: none;
    padding-left: 13px;
    background-color: #f0f0f0;
    border-top: 1px solid #cfcfcf;
    border-bottom: 1px solid #b5b5b5;
    color: #222;
    font-size: 14px;
}
.search-box svg {
    width: 16px;
    height: 16px;
    margin-right: 11px;
    fill: none;
    stroke: #222;
    stroke-width: 1.1;
}
.cortana {
    width: 50px;
    flex: none;
    display: flex;
    justify-content: center;
}
.cortana i {
    width: 15px;
    height: 15px;
    border: 2.5px solid #fff;
    border-radius: 50%;
}
.task-app {
    position: relative;
    width: 45px;
    height: 40px;
    flex: none;
    display: flex;
    align-items: center;
    justify-content: center;
}
.task-app.wide {
    width: 46.15px;
}
.task-app svg {
    width: 24px;
    height: 24px;
}
.task-app.on::after {
    content: "";
    position: absolute;
    left: 6px;
    right: 6px;
    bottom: 0;
    height: 2px;
    background-color: #f5c3aa;
}
.task-opera {
    margin-left: 1px;
    background-color: #3f3b38;
}
.task-app.task-opera::after {
    left: 0;
    right: 0;
}
.count {
    position: absolute;
    right: 3px;
    bottom: 5px;
    width: 16px;
    height: 16px;
    border: 1px solid #8d8d8d;
    border-radius: 50%;
    background-color: #3a3a3a;
    color: #fff;
    font-size: 10px;
    font-style: normal;
    line-height: 14px;
    text-align: center;
}
.tray {
    display: flex;
    align-items: center;
    margin-left: 24px;
    flex: 1;
    height: 40px;
    font-family: "Roboto", sans-serif;
    font-size: 12px;
}
.weather svg {
    display: block;
    width: 26px;
    height: 24px;
}
.temp {
    margin-left: 7px;
    font-size: 14.5px;
    width: 40px;
}
.tray-ico {
    fill: none;
    stroke: #fff;
}
.chev {
    width: 13px;
    height: 8px;
    margin-left: 5px;
}
.batt {
    width: 16px;
    height: 12px;
    margin-left: 10px;
}
.net-x {
    position: relative;
    width: 14px;
    height: 14px;
    margin-left: 9px;
}
.net-x svg {
    display: block;
    width: 14px;
    height: 12px;
}
.net-x i {
    position: absolute;
    right: -3px;
    bottom: -3px;
    width: 10px;
    height: 10px;
    border-radius: 50%;
    background-color: #d9202c;
    color: #fff;
    font-size: 9px;
    font-style: normal;
    line-height: 9px;
    text-align: center;
}
.wifi {
    width: 14px;
    height: 14px;
    margin-left: 12px;
}
.vol {
    width: 16px;
    height: 14px;
    margin-left: 6px;
}
.lang {
    margin-left: 12px;
    width: 24px;
}
.clock {
    display: flex;
    flex-direction: column;
    align-items: center;
    width: 66px;
    margin-left: 8px;
    font-size: 11.5px;
    line-height: 18px;
}
.notif {
    position: relative;
    width: 30px;
    height: 30px;
    margin-left: 7px;
    display: flex;
    align-items: center;
    justify-content: center;
}
.notif svg {
    width: 16px;
    height: 15px;
    margin-top: -8px;
}
.notif .count {
    right: -1px;
    bottom: 0;
}
```
